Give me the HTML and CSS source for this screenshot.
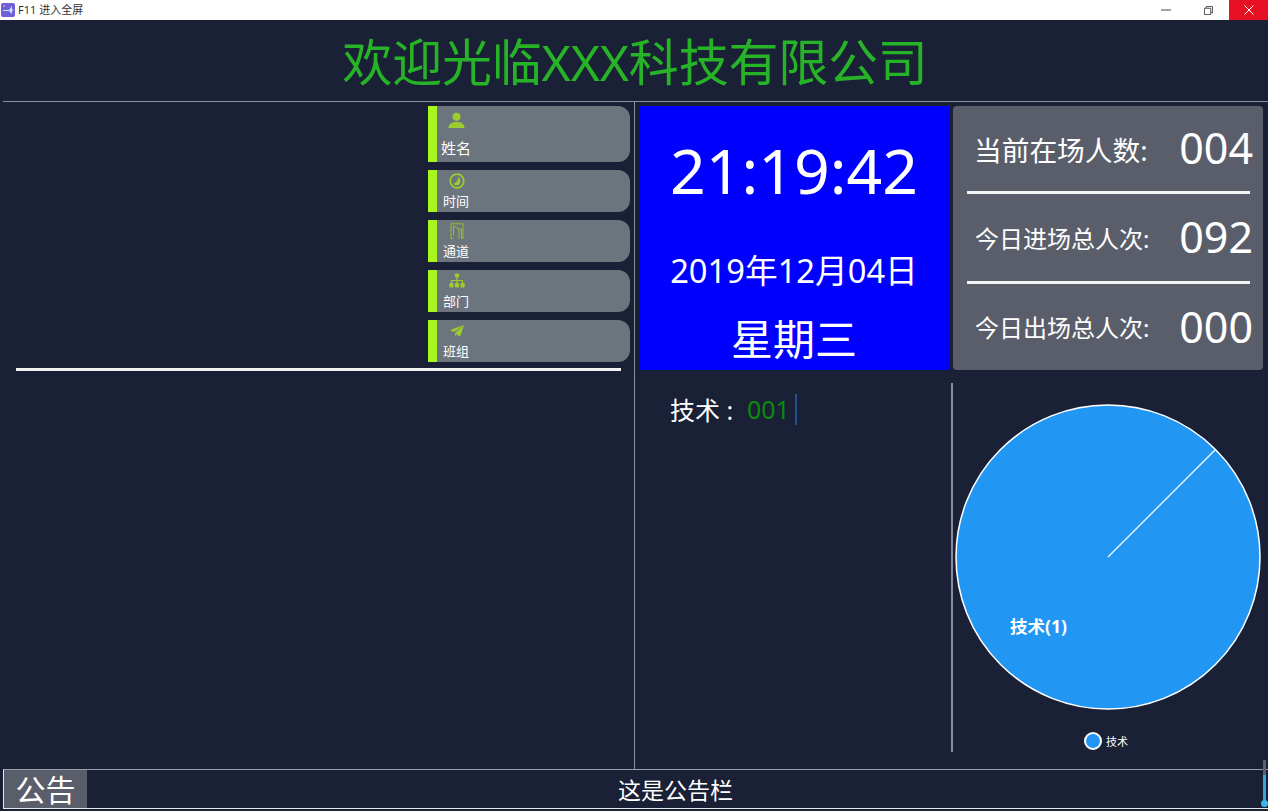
FILE: index.html
```html
<!DOCTYPE html>
<html lang="zh">
<head>
<meta charset="utf-8">
<title>F11 进入全屏</title>
<link rel="stylesheet" href="styles.css">
</head>
<body>
<div class="app">
  <div class="titlebar">
    <div class="tb-left">
      <svg class="app-icon" viewBox="0 0 14 14"><rect width="14" height="14" rx="2" fill="#6f5fd8"/><path d="M2 7h6l3-4v3.500h1.500v1H11V11L8 8H2z" fill="#bfe4fb"/><circle cx="3" cy="3" r="1" fill="#e98bb0"/></svg>
      <span class="tb-title">F11 进入全屏</span>
    </div>
    <div class="tb-btns">
      <div class="tb-btn"><svg viewBox="0 0 10 10" width="10" height="10"><path d="M0 5h10" stroke="#444" fill="none"/></svg></div>
      <div class="tb-btn"><svg viewBox="0 0 10 10" width="9" height="9"><path d="M2.500 2.500V.5h7v7h-2M.5 2.500h7v7h-7z" stroke="#444" fill="none"/></svg></div>
      <div class="tb-btn tb-close"><svg viewBox="0 0 10 10" width="10" height="10"><path d="M.5.5l9 9M9.500.5l-9 9" stroke="#fff" fill="none"/></svg></div>
    </div>
  </div>

  <header class="header">欢迎光临XXX科技有限公司</header>

  <main class="main">
    <section class="left">
      <div class="info-wrap">
        <div class="info-list">
          <div class="info-row row-big">
            <div class="icon-slot"><svg viewBox="0 0 16 16" width="17" height="17"><circle cx="8" cy="4.500" r="3.800" fill="#9ccc2e"/><path d="M0.500 15c0-4 3.500-5.500 7.500-5.500s7.500 1.500 7.500 5.500z" fill="#9ccc2e"/></svg></div>
            <div class="row-label label-big">姓名</div>
          </div>
          <div class="info-row">
            <div class="icon-slot"><svg viewBox="0 0 16 16" width="16" height="16"><circle cx="8" cy="8" r="6.800" fill="none" stroke="#9ccc2e" stroke-width="1.700"/><path d="M9 3.500c.8 3-.8 5.800-4.500 7.200 1 1.600 3.600 2.200 5.400.8 2-1.600 2.300-5.500-.9-8z" fill="#9ccc2e"/></svg></div>
            <div class="row-label">时间</div>
          </div>
          <div class="info-row">
            <div class="icon-slot"><svg viewBox="0 0 14 16" width="14" height="16"><path d="M1 15.500V.8h12v14.700h-1.500M1 15.500h2.500M3.500 3l5.500 3v9.500M3.500 3v9.500M9 6h2.500v9.500" fill="none" stroke="#8fbf2a" stroke-width="1"/></svg></div>
            <div class="row-label">通道</div>
          </div>
          <div class="info-row">
            <div class="icon-slot"><svg viewBox="0 0 16 15" width="16" height="15"><circle cx="8" cy="2.500" r="2.300" fill="#9ccc2e"/><path d="M8 4v4M2.500 10V7.500h11V10M8 8v2" stroke="#9ccc2e" stroke-width="1.200" fill="none"/><rect x="0.300" y="10" width="4.200" height="4.400" rx="1" fill="#9ccc2e"/><rect x="5.900" y="10" width="4.200" height="4.400" rx="1" fill="#9ccc2e"/><rect x="11.500" y="10" width="4.200" height="4.400" rx="1" fill="#9ccc2e"/></svg></div>
            <div class="row-label">部门</div>
          </div>
          <div class="info-row">
            <div class="icon-slot"><svg viewBox="0 0 14 12" width="14" height="12"><path d="M14 0L0 5l4 2zM14 0L5.500 7.500 8.500 11l2-.5zM5 8v3l2-1.500z" fill="#9ccc2e"/></svg></div>
            <div class="row-label">班组</div>
          </div>
        </div>
      </div>
      <div class="left-rule"></div>
    </section>

    <section class="right">
      <div class="top-row">
        <div class="clock">
          <div class="time">21:19:42</div>
          <div class="date">2019年12月04日</div>
          <div class="week">星期三</div>
        </div>
        <div class="stats">
          <div class="stat"><span class="stat-label stat-label-big">当前在场人数:</span><span class="stat-num">004</span></div>
          <div class="stat-rule"></div>
          <div class="stat stat-mid"><span class="stat-label">今日进场总人次:</span><span class="stat-num">092</span></div>
          <div class="stat-rule"></div>
          <div class="stat"><span class="stat-label">今日出场总人次:</span><span class="stat-num stat-num-last">000</span></div>
        </div>
      </div>
      <div class="bottom-row">
        <div class="dept-pane">
          <div class="dept-item"><span class="dept-name">技术 : </span><span class="dept-count">001</span><span class="dept-bar"></span></div>
        </div>
        <div class="chart-pane">
          <svg class="pie" viewBox="0 0 308 308" width="308" height="308">
            <circle cx="154" cy="154" r="152" fill="#2196f3" stroke="#fff" stroke-width="1.500"/>
            <path d="M154 154L261.500 46.500" stroke="#fff" stroke-width="1.200" fill="none"/>
            <text class="pie-label" x="56" y="230">技术(1)</text>
          </svg>
          <div class="legend"><span class="legend-dot"></span><span class="legend-text">技术</span></div>
        </div>
      </div>
    </section>
  </main>

  <footer class="notice">
    <div class="notice-tag">公告</div>
    <div class="notice-text">这是公告栏</div>
  </footer>
  <div class="scroll-mark"></div>
</div>
</body>
</html>
```
FILE: styles.css
```css
* { box-sizing: border-box; }
html, body { margin: 0; padding: 0; height: 100%; overflow: hidden; }
body {
  background: #1a2035;
  color: #fff;
  font-family: "Noto Sans", "Noto Sans CJK SC", sans-serif;
}
.app { position: relative; width: 1268px; height: 811px; display: flex; flex-direction: column; }

.titlebar { height: 20px; background: #fff; display: flex; justify-content: space-between; flex: none; }
.tb-left { display: flex; align-items: center; padding-left: 1px; gap: 3px; }
.app-icon { width: 14px; height: 14px; }
.tb-title { color: #333; font-size: 11px; line-height: 20px; }
.tb-btns { display: flex; }
.tb-btn { width: 42px; height: 20px; display: flex; align-items: center; justify-content: center; }
.tb-btn.tb-close { background: #e81123; width: 39px; }

.header {
  height: 82px; flex: none;
  border-bottom: 1px solid #8b8f9b;
  margin: 0 0 0 3px;
  text-align: center;
  color: #27b327;
  font-size: 50px;
  line-height: 85px;
  letter-spacing: -0.200px;
  padding-right: 1px;
}

.main { flex: none; height: 667px; display: flex; }
.left { width: 635px; flex: none; border-right: 1px solid #8b8f9b; padding-top: 4px; }
.info-wrap { display: flex; justify-content: flex-end; padding-right: 4px; }
.info-list { width: 202px; display: flex; flex-direction: column; gap: 8.600px; }
.info-row {
  height: 41.500px;
  background: #6c757d;
  border-left: 9px solid #a8f51f;
  border-radius: 0 12px 12px 0;
  display: flex; flex-direction: column;
  padding-left: 6px;
  width: 202px;
}
.info-row.row-big { height: 55.500px; padding-left: 4px; }
.icon-slot { height: 21px; width: 27px; display: flex; align-items: center; justify-content: center; flex: none; }
.row-big .icon-slot { height: 28px; width: 31px; }
.row-label { font-size: 13px; line-height: 19px; margin-top: 1px; color: #fff; }
.row-label.label-big { font-size: 15px; line-height: 28px; margin-top: 0; }
.left-rule { height: 3px; background: #f2f2f2; margin: 6px 13px 0 16px; }

.right { flex: 1; min-width: 0; padding: 4px 5px 0 4px; display: flex; flex-direction: column; }
.top-row { display: flex; gap: 4px; height: 264px; flex: none; }
.clock {
  width: 310px; flex: none; background: #0000ff;
  display: flex; flex-direction: column; align-items: center;
}
.time { font-size: 62.500px; line-height: 88px; margin-top: 20px; }
.date { font-size: 32.700px; line-height: 46px; margin-top: 34px; }
.week { font-size: 42px; line-height: 58px; margin-top: 16px; }
.stats {
  flex: 1; background: #5a5e6b; border-radius: 4px;
  display: flex; flex-direction: column;
  padding: 0 10px 0 14px;
}
.stat { height: 85px; display: flex; align-items: center; justify-content: space-between; padding-left: 8px; flex: none; }
.stat.stat-mid { height: 87px; }
.stat-label { font-size: 24px; }
.stat-label.stat-label-big { font-size: 27.700px; margin-left: -1px; }
.stat-num { font-size: 43px; margin-top: -2px; }
.stat-num.stat-num-last { margin-top: 0; }
.stat-rule { height: 3px; background: #f4f4f4; margin-right: 3px; flex: none; }

.bottom-row { flex: 1; display: flex; min-height: 0; padding-top: 13px; }
.dept-pane { width: 314px; flex: none; height: 369px; border-right: 2px solid #8b8f9b; padding: 9px 0 0 31px; }
.dept-item { display: flex; align-items: center; height: 34px; }
.dept-name { font-size: 25px; width: 77px; white-space: pre; }
.dept-count { font-size: 25px; color: #0c8a0c; width: 48px; }
.dept-bar { width: 2px; height: 31px; background: #24508f; }
.chart-pane { flex: 1; display: flex; flex-direction: column; align-items: center; padding-top: 20px; }
.pie { display: block; flex: none; }
.pie-label { font-size: 17.500px; font-weight: 700; fill: #fff; }
.legend { display: flex; align-items: center; gap: 4px; margin-top: 21px; margin-left: -4px; }
.legend-dot { width: 18px; height: 18px; border-radius: 50%; background: #2196f3; border: 2px solid #fff; }
.legend-text { font-size: 11px; color: #fff; }

.notice {
  flex: none; height: 40px;
  margin-left: 3px;
  display: flex;
  border-top: 1px solid #9a9eaa;
  border-bottom: 1px solid #e8e8e8;
  border-left: 1px solid #e8e8e8;
}
.notice-tag {
  width: 83px; background: #5a5e6b; flex: none;
  font-size: 30px; line-height: 40px; text-align: center;
}
.notice-text { flex: 1; text-align: center; font-size: 23px; line-height: 40px; padding-right: 4px; }
.scroll-mark {
  position: absolute; right: 2px; top: 760px; width: 3px; height: 42px;
  background: linear-gradient(#5c6070 0 15px, #3da3dc 15px);
}
.scroll-mark::after {
  content: ""; position: absolute; left: -2px; bottom: -5px; width: 7px; height: 7px;
  border-radius: 50%; background: #3db5ea;
}
```
